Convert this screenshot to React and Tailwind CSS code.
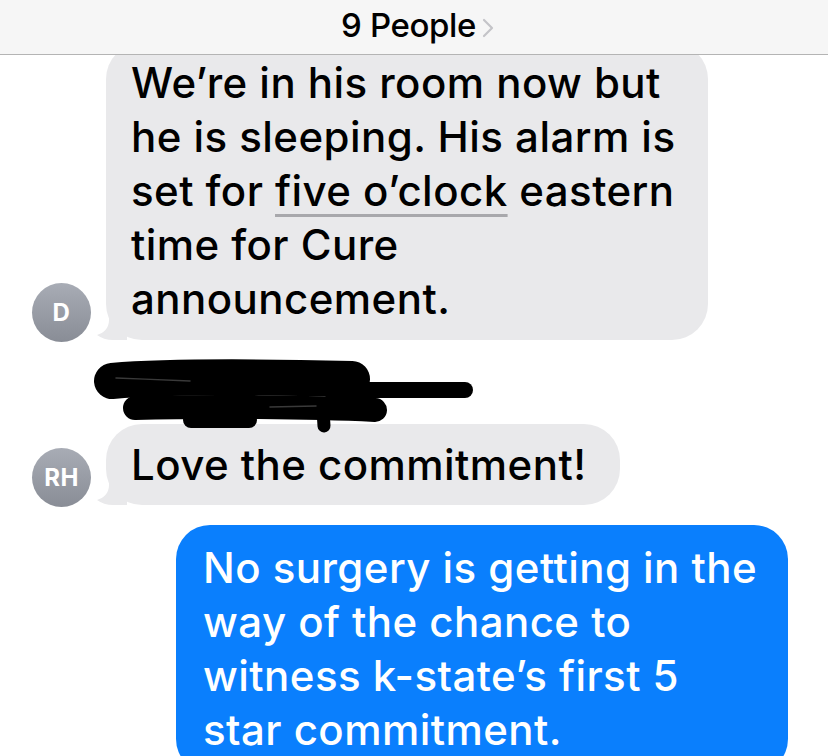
const font = { fontFamily: "Inter, 'Noto Sans', sans-serif" };

function Avatar({ initials }) {
  return (
    <div className="w-[59px] h-[59px] shrink-0 mb-[-2px] rounded-full bg-gradient-to-b from-[#a8acb5] to-[#898d96] flex items-center justify-center text-white font-bold text-[24px] leading-none tracking-[0.5px]">
      {initials}
    </div>
  );
}

function Tail({ color }) {
  return (
    <svg
      className="absolute left-[-9px] bottom-0"
      width="30"
      height="26"
      viewBox="0 0 30 26"
    >
      <path
        d="M30 0 L30 26 L16 26 C10 26 4 24 0 21 C7 19 12 14 12 6 L12 0 Z"
        fill={color}
      />
    </svg>
  );
}

// black marker scribble over the sender's name
function Scribble() {
  return (
    <svg
      width="390"
      height="90"
      viewBox="0 0 390 90"
      className="relative z-10 ml-[90px] mt-[10px] shrink-0"
    >
      <g stroke="#000" fill="none" strokeLinecap="round" strokeLinejoin="round">
        <path d="M22 31 C80 26 180 27 262 29" strokeWidth="36" />
        <path d="M240 40 L375 40" strokeWidth="16" />
        <path d="M45 58 C120 56 220 57 285 60" strokeWidth="24" />
        <path d="M101 70 L159 70" strokeWidth="16" />
        <path d="M233 60 L234 76" strokeWidth="13" />
      </g>
      <g stroke="#3a3a3a" fill="none" strokeLinecap="round" strokeWidth="1.5">
        <path d="M26 28 C50 29 80 30 100 31" />
        <path d="M180 57 L226 56" />
      </g>
    </svg>
  );
}

export default function App() {
  return (
    <div
      className="w-[828px] h-[756px] overflow-hidden bg-white flex flex-col antialiased"
      style={font}
    >
      <div className="relative z-20 h-[55px] shrink-0 bg-[#f6f6f6] border-b border-[#b4b4b4] flex items-center justify-center">
        <span className="text-[33px] font-medium text-black tracking-[-0.4px] ml-[8px] mb-[2px]">
          9 People
        </span>
        <svg width="14" height="20" viewBox="0 0 14 20" className="ml-[5px] mt-[1px]">
          <path
            d="M3 2 L11 10 L3 18"
            stroke="#c4c4c8"
            strokeWidth="2.2"
            fill="none"
            strokeLinecap="round"
            strokeLinejoin="round"
          />
        </svg>
      </div>

      <div className="flex flex-col text-[42px] font-medium leading-[54px] tracking-[0.45px]">
        <div className="flex items-end pl-[32px] gap-[15px] -mt-[12px]">
          <Avatar initials="D" />
          <div className="relative bg-[#e9e9eb] rounded-[36px] w-[602px] pl-[25px] pr-[20px] pt-[13px] pb-[14px] text-black">
            <Tail color="#e9e9eb" />
            <p className="relative">
              We’re in his room now but
              <br />
              he is sleeping. His alarm is
              <br />
              set for{" "}
              <span className="underline decoration-[#a8a8ac] decoration-[3px] underline-offset-[8px]">
                five o’clock
              </span>{" "}
              eastern
              <br />
              time for Cure
              <br />
              announcement.
            </p>
          </div>
        </div>

        <div className="h-[84px] flex items-start">
          <Scribble />
        </div>

        <div className="flex items-end pl-[32px] gap-[15px]">
          <Avatar initials="RH" />
          <div className="relative bg-[#e9e9eb] rounded-[36px] pl-[25px] pr-[34px] pt-[14px] pb-[13px] text-black">
            <Tail color="#e9e9eb" />
            <p className="relative">Love the commitment!</p>
          </div>
        </div>

        <div className="flex justify-end pr-[40px] mt-[20px]">
          <div className="bg-[#0a7ffd] rounded-[34px] w-[612px] pl-[27px] pr-[20px] pt-[16px] pb-[16px] text-white">
            <p>
              No surgery is getting in the
              <br />
              way of the chance to
              <br />
              witness k-state’s first 5
              <br />
              star commitment.
            </p>
          </div>
        </div>
      </div>
    </div>
  );
}
